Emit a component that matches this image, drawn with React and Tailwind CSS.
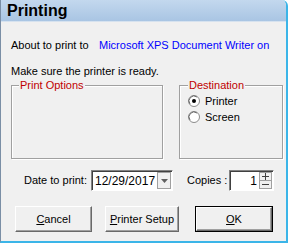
import React from "react";

function Radio({ checked }) {
  return (
    <svg width="12" height="12" viewBox="0 0 12 12" className="shrink-0">
      <circle cx="6" cy="6" r="5.5" fill="#ffffff" stroke="#8a8a8a" />
      <path d="M2 9 A5 5 0 0 1 9 2" fill="none" stroke="#6e6e6e" strokeWidth="1" />
      {checked && <circle cx="6" cy="6" r="2" fill="#000" />}
    </svg>
  );
}

export default function App() {
  return (
    <div
      className="w-[288px] h-[243px] bg-[#f0f0f0] relative overflow-hidden border-l border-[#7a8ea5] border-r-2 border-r-[#3bb5e8] border-b-2 border-b-[#3bb5e8] rounded-tr-[6px] whitespace-nowrap"
      style={{ fontFamily: '"Liberation Sans", Arial, sans-serif' }}
    >
      <div className="h-[22px] bg-gradient-to-b from-[#c3d8ee] to-[#a9c5e3] flex items-center pl-[6px] border-b border-[#d6e2ef]">
        <span className="text-[16px] font-bold text-black leading-none">Printing</span>
      </div>
      <div className="pl-[10px] pr-[3px] text-[11px] text-black">
        <div className="flex mt-[16px] h-[14px] items-center">
          <span className="w-[88px]">About to print to</span>
          <span className="text-[#0000ff]">Microsoft XPS Document Writer on</span>
        </div>
        <div className="mt-[12px] h-[14px] flex items-center">Make sure the printer is ready.</div>
        <div className="flex mt-[7px] h-[74px]">
          <div className="relative w-[152px] border border-[#a0a0a0] shadow-[inset_1px_1px_0_#ffffff,1px_1px_0_#ffffff]">
            <span className="absolute -top-[8px] left-[7px] bg-[#f0f0f0] px-[1px] text-[#c00000] leading-[14px]">Print Options</span>
          </div>
          <div className="relative w-[104px] ml-[16px] border border-[#a0a0a0] shadow-[inset_1px_1px_0_#ffffff,1px_1px_0_#ffffff]">
            <span className="absolute -top-[8px] left-[8px] bg-[#f0f0f0] px-[1px] text-[#c00000] leading-[14px]">Destination</span>
            <div className="flex flex-col gap-[4px] pl-[8px] pt-[9px]">
              <div className="flex items-center gap-[5px] h-[12px]">
                <Radio checked />
                <span>Printer</span>
              </div>
              <div className="flex items-center gap-[5px] h-[12px]">
                <Radio />
                <span>Screen</span>
              </div>
            </div>
          </div>
        </div>
        <div className="flex items-center mt-[11px] h-[21px]">
          <span className="ml-[13px] w-[67px]">Date to print:</span>
          <div className="w-[82px] h-[21px] bg-white border border-[#828282] border-r-white border-b-white shadow-[inset_1px_1px_0_#404040] flex items-center">
            <span className="pl-[3px] text-[12px] flex-1">12/29/2017</span>
            <div className="w-[14px] h-[17px] mr-[1px] border border-[#a0a0a0] bg-[#f0f0f0] flex items-center justify-center">
              <svg width="7" height="4" viewBox="0 0 7 4"><path d="M0 0H7L3.5 4Z" fill="#606060" /></svg>
            </div>
          </div>
          <span className="ml-[14px] w-[42px]">Copies :</span>
          <div className="w-[45px] h-[21px] bg-white border border-[#828282] border-r-white border-b-white shadow-[inset_1px_1px_0_#404040] flex items-center">
            <span className="flex-1 text-right pr-[2px] text-[12px]">1</span>
            <div className="w-[13px] h-[17px] mr-[1px] flex flex-col border border-[#a0a0a0] bg-[#f0f0f0]">
              <div className="flex-1 flex items-center justify-center border-b border-[#a0a0a0]">
                <svg width="7" height="7" viewBox="0 0 7 7"><path d="M3 0H4V3H7V4H4V7H3V4H0V3H3Z" fill="#404040" /></svg>
              </div>
              <div className="flex-1 flex items-center justify-center">
                <svg width="7" height="1" viewBox="0 0 7 1"><rect width="7" height="1" fill="#404040" /></svg>
              </div>
            </div>
          </div>
        </div>
        <div className="flex mt-[15px] h-[26px]">
          <button className="ml-[4px] w-[77px] h-[26px] bg-[#f0f0f0] border border-t-white border-l-white border-r-[#696969] border-b-[#696969] shadow-[inset_-1px_-1px_0_#a0a0a0] text-[11px]">
            <u>C</u>ancel
          </button>
          <button className="ml-[13px] w-[74px] h-[26px] bg-[#f0f0f0] border border-t-white border-l-white border-r-[#696969] border-b-[#696969] shadow-[inset_-1px_-1px_0_#a0a0a0] text-[11px]">
            <u>P</u>rinter Setup
          </button>
          <div className="ml-[16px] w-[78px] h-[26px] border border-black">
            <button className="w-full h-full bg-[#f0f0f0] border border-t-white border-l-white border-r-[#696969] border-b-[#696969] shadow-[inset_-1px_-1px_0_#a0a0a0] text-[11px]">
              <u>O</u>K
            </button>
          </div>
        </div>
      </div>
    </div>
  );
}
